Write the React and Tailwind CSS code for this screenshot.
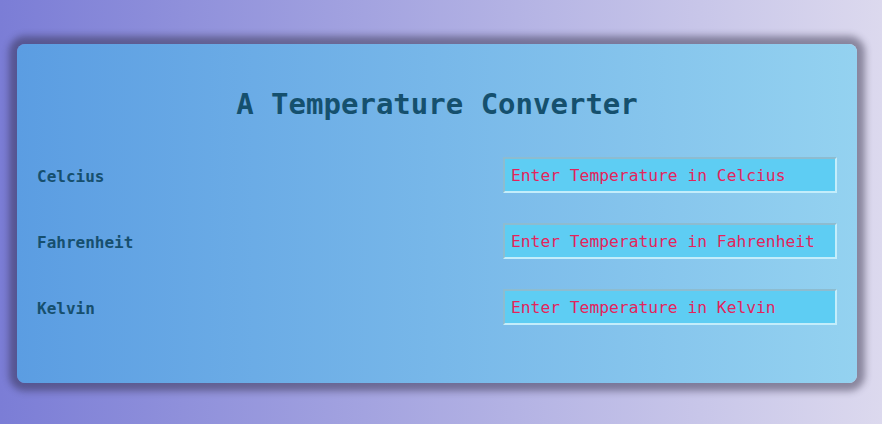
import React from "react";

const rows = [
  { label: "Celcius", ph: "Enter Temperature in Celcius" },
  { label: "Fahrenheit", ph: "Enter Temperature in Fahrenheit" },
  { label: "Kelvin", ph: "Enter Temperature in Kelvin" },
];

export default function App() {
  return (
    <div
      className="w-[882px] h-[424px] overflow-hidden bg-[linear-gradient(to_right,#7b7dd6,#dcd9ee)] pt-[44px] pl-[17px]"
      style={{ fontFamily: '"DejaVu Sans Mono", monospace' }}
    >
      <div className="w-[840px] h-[339px] rounded-[8px] bg-[linear-gradient(to_right,#5b9de2,#94d2f0)] shadow-[0_0_7px_8px_rgba(40,35,60,0.45)] pt-[42px] px-[20px] flex flex-col">
        <h1 className="text-center text-[29px] leading-[36px] font-bold text-[#15506e]">
          A Temperature Converter
        </h1>
        <div className="mt-[35px] flex flex-col gap-[30px]">
          {rows.map((r) => (
            <div key={r.label} className="flex items-center justify-between h-[36px]">
              <label className="block pt-[3px] text-[16px] font-bold text-[#164f6e]">{r.label}</label>
              <input
                placeholder={r.ph}
                className="w-[334px] h-[36px] border-2 border-t-[#8dbcd0] border-l-[#8dbcd0] border-b-[#c3edfb] border-r-[#c3edfb] bg-[#5ecdf3] pl-[6px] pt-[1px] text-[16.3px] text-[#e3245c] placeholder:text-[#e3245c] outline-none"
                style={{ fontFamily: '"DejaVu Sans Mono", monospace' }}
              />
            </div>
          ))}
        </div>
      </div>
    </div>
  );
}
